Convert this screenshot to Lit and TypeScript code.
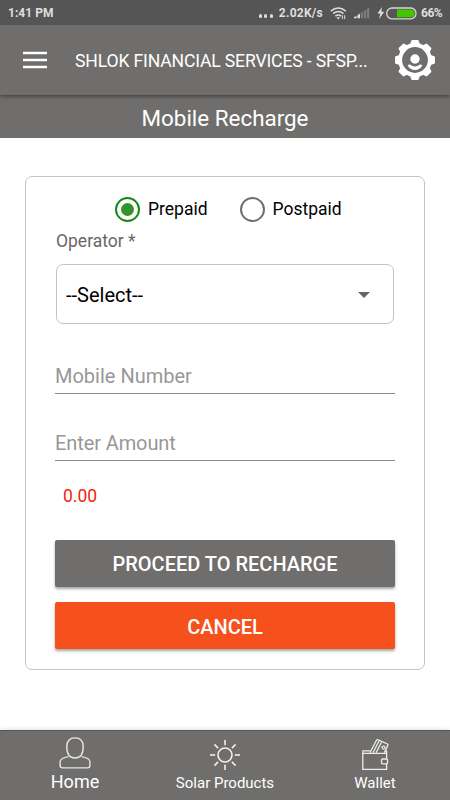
import { LitElement, html, css, svg } from "lit";
import { customElement, state } from "lit/decorators.js";

const teeth = [0, 45, 90, 135, 180, 225, 270, 315];

const menuIcon = html`<svg width="24" height="18" viewBox="0 0 24 18">
  <path d="M0 2.1H24M0 9H24M0 15.9H24" stroke="#fff" stroke-width="2.5" />
</svg>`;

const gearIcon = html`<svg width="40" height="40" viewBox="-20 -20 40 40">
  <circle r="14.9" fill="none" stroke="#fff" stroke-width="4" />
  ${teeth.map((a) => svg`<path transform="rotate(${a})" fill="#fff" d="M-5 -15.5L-3.7 -19.3Q-3.5 -20 -2.8 -20H2.8Q3.5 -20 3.7 -19.3L5 -15.5Z" />`)}
  <circle cy="-1" r="4.7" fill="#fff" />
  <path d="M-7.3 5.6Q-6.6 4.3 -5 4.6Q0 8.4 5 4.6Q6.6 4.3 7.3 5.6Q5 10 0 10Q-5 10 -7.3 5.6Z" fill="#fff" />
</svg>`;

const wifiIcon = html`<svg width="17" height="13" viewBox="0 0 17 13" fill="none" stroke="#dedede" stroke-width="1.5">
  <path d="M.8 4.1Q8.3 -2.2 15.8 4.1M3.1 6.7Q8.3 2.4 13.5 6.7M5.4 9.2Q8.3 6.8 11.2 9.2" />
  <path d="M6.5 10.2H10.1L8.3 12.4Z" fill="#dedede" stroke="none" />
  <path d="M12.4 8.2V12M14.7 8.2V12" stroke-width="1" />
</svg>`;

const signalIcon = html`<svg width="16" height="12" viewBox="0 0 16 12">
  <path d="M0 11.2V10L2.6 8.9V11.2ZM3.4 11.2V8.3L6 6.5V11.2Z" fill="#dedede" />
  <path d="M6.8 11.2V6L9.2 4.5V11.2ZM10 11.2V3.9L12.2 2.5V11.2ZM13 11.2V2L15.3 .5V11.2Z" fill="#7d7d7d" />
</svg>`;

const boltIcon = html`<svg width="8" height="12" viewBox="0 0 8 12">
  <path d="M5 0L.4 6.6H3.3L2 12L7.3 4.8H4.3Z" fill="#dedede" />
</svg>`;

const batteryIcon = html`<svg width="31" height="13" viewBox="0 0 31 13">
  <rect x=".7" y="1" width="29.3" height="10.8" rx="5.2" fill="none" stroke="#d8d8d8" stroke-width="1.3" />
  <path d="M11 2.6H24.8A3.8 3.8 0 0 1 24.8 10.2H11Z" fill="#44c400" />
</svg>`;

const homeIcon = html`<svg width="32" height="32" viewBox="0 0 32 32" fill="none" stroke="#e6e6e6" stroke-width="1.4" stroke-linejoin="round">
  <path d="M16 .9C21.4 .9 24.2 4.4 24.2 9.8C24.2 16.6 21.4 21 16 21C10.6 21 7.8 16.6 7.8 9.8C7.8 4.4 10.6 .9 16 .9Z" />
  <path d="M9.6 19.6C5 20.4 1.1 21.7 1.1 24.8V28.3Q1.1 30.9 3.6 30.9H28.4Q30.9 30.9 30.9 28.3V24.8C30.9 21.7 27 20.4 22.4 19.6" />
</svg>`;

const sunIcon = html`<svg width="32" height="32" viewBox="-16 -16 32 32" fill="none" stroke="#f0f0f0" stroke-width="1.6">
  <circle r="7" />
  ${teeth.map((a) => svg`<path transform="rotate(${a})" d="M0 -9.8V-15" />`)}
</svg>`;

const walletIcon = html`<svg width="28" height="32" viewBox="0 0 28 32" fill="none" stroke="#ececec" stroke-width="1.3" stroke-linejoin="round">
  <path d="M9 11.8H1.8V30.4H25.6V24.8M1.8 14.4H25.6V20M25.6 14.4V12H23.8" />
  <path d="M9 13.8L15.6 1Q16.3 .4 17.3 .9L26.4 5Q27.3 5.6 26.8 6.6L23.3 13.8M12 13.8L18 2M15 13.8L20.5 3.2" />
  <circle cx="22.6" cy="8.6" r="1.5" />
  <rect x="20.5" y="20" width="6" height="4.8" rx="1" />
</svg>`;

@customElement("app-root")
export class AppRoot extends LitElement {
  @state() private plan = "Prepaid";

  static styles = css`
    :host {
      display: flex;
      flex-direction: column;
      height: 800px;
      background: #fff;
      font-family: Roboto, sans-serif;
      color: #fff;
      overflow: hidden;
    }
    * { box-sizing: border-box; }
    svg { display: block; flex: none; overflow: visible; }
    .status {
      height: 25px;
      background: #555;
      display: flex;
      align-items: center;
      padding: 1px 8px 0;
      color: #dedede;
      font-size: 12px;
      font-weight: 700;
      white-space: nowrap;
    }
    .time { flex: 1; letter-spacing: 0.05px; }
    .dots { display: flex; gap: 2.2px; margin: 6px 6px 0 0; }
    .dots i { width: 3.2px; height: 3.2px; border-radius: 50%; background: #dedede; }
    .rate { letter-spacing: 0.25px; margin-right: 7px; }
    .wifi { margin-right: 7px; }
    .signal { margin-right: 7px; }
    .battery { margin: 0 4px 0 1px; }
    .percent { width: 21px; letter-spacing: -0.5px; }
    .bar {
      height: 70px;
      background: #6f6e6c;
      box-shadow: 0 1px 4px rgba(0, 0, 0, 0.5);
      z-index: 1;
      display: flex;
      align-items: center;
      padding: 0 15px 0 23px;
      clip-path: inset(0 0 -8px 0);
    }
    .title {
      flex: 1;
      margin-left: 28px;
      padding-top: 1px;
      font-size: 17.6px;
      letter-spacing: -0.16px;
      line-height: 24px;
      white-space: nowrap;
    }
    .heading {
      height: 43px;
      background: #6f6e6c;
      display: flex;
      justify-content: center;
      align-items: center;
      padding-top: 3px;
      font-size: 22.4px;
    }
    .main { flex: 1; padding: 38px 25px 0; }
    .card {
      height: 494px;
      border: 1px solid #c4c4c4;
      border-radius: 7px;
      padding: 19px 29px 0;
      color: #000;
      display: flex;
      flex-direction: column;
    }
    .radios { display: flex; gap: 32px; height: 26px; align-items: center; padding-left: 60px; }
    .radio { display: flex; align-items: center; gap: 8px; font-size: 17.5px; cursor: pointer; }
    .ring {
      width: 25px;
      height: 25px;
      border: 2.4px solid #6f6f6f;
      border-radius: 50%;
      display: grid;
      place-items: center;
    }
    .ring.on { border-color: #118a11; }
    .ring.on::after { content: ""; width: 13px; height: 13px; border-radius: 50%; background: #33912f; }
    .label { height: 24px; line-height: 24px; margin: 7px 0 0 1px; font-size: 17.5px; color: #6b6565; }
    .select {
      height: 60px;
      margin: 11px 1px 0;
      border: 1px solid #c2c2c2;
      border-radius: 7px;
      display: flex;
      align-items: center;
      justify-content: space-between;
      padding: 2px 23px 0 9px;
      font-size: 20px;
    }
    .caret { border: 6px solid transparent; border-top-color: #666; border-bottom: 0; }
    .field {
      height: 37px;
      border-bottom: 1.5px solid #8a8a8a;
      color: #979797;
      font-size: 20px;
      line-height: 39px;
    }
    .number { margin-top: 33px; }
    .amount { margin-top: 30px; letter-spacing: -0.1px; }
    .total { height: 24px; line-height: 24px; margin: 23px 0 0 8px; font-size: 17.5px; color: #f3230b; }
    .btn {
      height: 47px;
      border-radius: 2px;
      display: flex;
      align-items: center;
      justify-content: center;
      font-size: 20px;
      font-weight: 500;
      color: #fff;
      box-shadow: 0 2px 3px rgba(0, 0, 0, 0.36);
    }
    .proceed { background: #6f6e6c; margin-top: 32px; }
    .cancel { background: #f6511d; margin-top: 15px; padding-top: 2px; }
    .nav {
      height: 70px;
      background: #6f6e6c;
      border-top: 1px solid #555;
      box-shadow: 0 0 5px rgba(0, 0, 0, 0.16);
      display: grid;
      grid-template-columns: repeat(3, 1fr);
    }
    .tab { display: flex; flex-direction: column; align-items: center; font-size: 15px; padding-top: 8px; }
    .tab span { line-height: 20px; margin-top: 2px; white-space: nowrap; }
    .tab.active { font-size: 18px; padding-top: 6px; }
    .tab.active span { margin-top: 3px; }
  `;

  render() {
    return html`
      <div class="status">
        <span class="time">1:41 PM</span>
        <span class="dots"><i></i><i></i><i></i></span>
        <span class="rate">2.02K/s</span>
        <span class="wifi">${wifiIcon}</span>
        <span class="signal">${signalIcon}</span>
        ${boltIcon}
        <span class="battery">${batteryIcon}</span>
        <span class="percent">66%</span>
      </div>
      <header class="bar">
        ${menuIcon}
        <div class="title">SHLOK FINANCIAL SERVICES - SFSP...</div>
        ${gearIcon}
      </header>
      <div class="heading">Mobile Recharge</div>
      <main class="main">
        <div class="card">
          <div class="radios">
            ${["Prepaid", "Postpaid"].map(
              (name) => html`<div class="radio" @click=${() => (this.plan = name)}>
                <span class="ring ${this.plan === name ? "on" : ""}"></span>${name}
              </div>`
            )}
          </div>
          <div class="label">Operator *</div>
          <div class="select">--Select--<span class="caret"></span></div>
          <div class="field number">Mobile Number</div>
          <div class="field amount">Enter Amount</div>
          <div class="total">0.00</div>
          <div class="btn proceed">PROCEED TO RECHARGE</div>
          <div class="btn cancel">CANCEL</div>
        </div>
      </main>
      <nav class="nav">
        <div class="tab active">${homeIcon}<span>Home</span></div>
        <div class="tab">${sunIcon}<span>Solar Products</span></div>
        <div class="tab">${walletIcon}<span>Wallet</span></div>
      </nav>
    `;
  }
}
